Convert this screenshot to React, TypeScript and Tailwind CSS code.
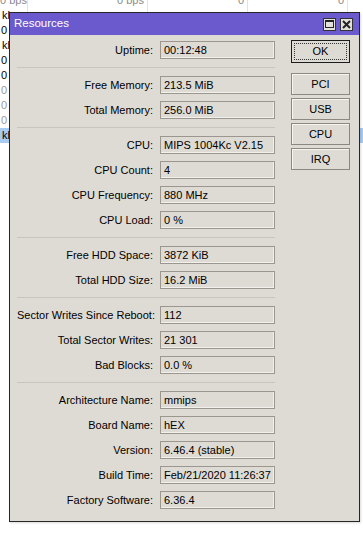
import React from 'react';

type Row = [string, string];

const groups: Row[][] = [
  [['Uptime', '00:12:48']],
  [
    ['Free Memory', '213.5 MiB'],
    ['Total Memory', '256.0 MiB'],
  ],
  [
    ['CPU', 'MIPS 1004Kc V2.15'],
    ['CPU Count', '4'],
    ['CPU Frequency', '880 MHz'],
    ['CPU Load', '0 %'],
  ],
  [
    ['Free HDD Space', '3872 KiB'],
    ['Total HDD Size', '16.2 MiB'],
  ],
  [
    ['Sector Writes Since Reboot', '112'],
    ['Total Sector Writes', '21 301'],
    ['Bad Blocks', '0.0 %'],
  ],
  [
    ['Architecture Name', 'mmips'],
    ['Board Name', 'hEX'],
    ['Version', '6.46.4 (stable)'],
    ['Build Time', 'Feb/21/2020 11:26:37'],
    ['Factory Software', '6.36.4'],
  ],
];

// rows of the list that sits behind the window (only the left edge shows)
const bgRows: { first: string; dim?: boolean; sel?: boolean }[] = [
  { first: 'kbps' },
  { first: '0 bps' },
  { first: 'kbps' },
  { first: '0 bps' },
  { first: '0 bps' },
  { first: '0 bps', dim: true },
  { first: '0 bps', dim: true },
  { first: '0 bps', dim: true },
  { first: 'kbps', sel: true },
];

const Field: React.FC<{ label: string; value: string }> = ({ label, value }) => (
  <div className="flex items-center h-[18px]">
    <div className="w-[136px] text-right whitespace-nowrap">{label}:</div>
    <div className="ml-[7px] w-[115px] h-[18px] border border-[#9b978f] shadow-[inset_-1px_-1px_0_#f2f0ec] pl-[3px] leading-[16px] whitespace-nowrap overflow-hidden">
      {value}
    </div>
  </div>
);

const SideButton: React.FC<{ label: string; isDefault?: boolean }> = ({ label, isDefault }) =>
  isDefault ? (
    <div className="h-[23px] border border-[#1c1c1c] p-[2px]">
      <div className="h-full border border-dotted border-[#333] flex items-center justify-center">{label}</div>
    </div>
  ) : (
    <div className="h-[22px] border border-[#8c8881] shadow-[inset_1px_1px_0_#f7f5f2] flex items-center justify-center">
      {label}
    </div>
  );

export default function App() {
  return (
    <div className="relative w-[363px] h-[541px] bg-white overflow-hidden font-['Liberation_Sans',Arial,sans-serif] text-[11px] text-black">
      {/* list behind the window */}
      <div className="-mt-[7px]">
        <div className="flex h-[15px] leading-[15px] text-[#8a8a8a] whitespace-nowrap">
          <div className="w-[28px] border-r border-[#e3e3e3] text-right pr-[3px]">0 bps</div>
          <div className="w-[120px] border-r border-[#e3e3e3] text-right pr-[3px]">0 bps</div>
          <div className="w-[100px] border-r border-[#e3e3e3] text-right pr-[3px]">0</div>
          <div className="w-[100px] border-r border-[#e3e3e3] text-right pr-[3px]">0</div>
          <div className="flex-1" />
        </div>
        {bgRows.map((r, i) => (
          <div
            key={i}
            className={`flex h-[15px] leading-[15px] ${r.sel ? 'bg-[#a9cbf2]' : ''} ${r.dim ? 'text-[#9a9a9a]' : ''}`}
          >
            <div className={`w-[28px] border-r border-[#e3e3e3] overflow-hidden whitespace-nowrap ${r.first === 'kbps' ? 'pl-[2px]' : 'pl-[1px]'}`}>
              {r.first}
            </div>
            <div className="w-[120px] border-r border-[#e3e3e3]" />
            <div className="w-[100px] border-r border-[#e3e3e3]" />
            <div className="w-[100px] border-r border-[#e3e3e3]" />
            <div className="flex-1" />
          </div>
        ))}
      </div>

      {/* Resources window */}
      <div className="absolute left-[9px] top-[12px] w-[351px] border border-[#262626] bg-[#dedbd5] shadow-[1px_1px_2px_rgba(0,0,0,0.15)]">
        <div className="h-[22px] bg-[#6a5acd] flex items-center pl-[4px] pr-[6px]">
          <span className="text-white text-[11.5px] flex-1">Resources</span>
          <div className="flex gap-[4px]">
            <div className="w-[13px] h-[13px] bg-[#e4e1dc] border border-[#333] flex items-center justify-center">
              <div className="w-[9px] h-[8px] border border-[#222] border-t-2" />
            </div>
            <div className="w-[13px] h-[13px] bg-[#e4e1dc] border border-[#333] flex items-center justify-center">
              <svg width="9" height="9" viewBox="0 0 9 9">
                <path d="M1 1 L8 8 M8 1 L1 8" stroke="#222" strokeWidth="2" />
              </svg>
            </div>
          </div>
        </div>

        <div className="flex pl-[7px] pr-[9px] pb-[12px]">
          <div className="flex flex-col gap-[7px] pt-[6px]">
            {groups.map((g, gi) => (
              <React.Fragment key={gi}>
                {gi > 0 && (
                  <div className="h-[3px] flex items-center">
                    <div className="w-[258px] h-px bg-[#c9c5be]" />
                  </div>
                )}
                {g.map(([l, v]) => (
                  <Field key={l} label={l} value={v} />
                ))}
              </React.Fragment>
            ))}
          </div>
          <div className="ml-[16px] w-[59px] pt-[5px] flex flex-col">
            <SideButton label="OK" isDefault />
            <div className="mt-[10px] flex flex-col gap-[3px]">
              <SideButton label="PCI" />
              <SideButton label="USB" />
              <SideButton label="CPU" />
              <SideButton label="IRQ" />
            </div>
          </div>
        </div>
      </div>
    </div>
  );
}
